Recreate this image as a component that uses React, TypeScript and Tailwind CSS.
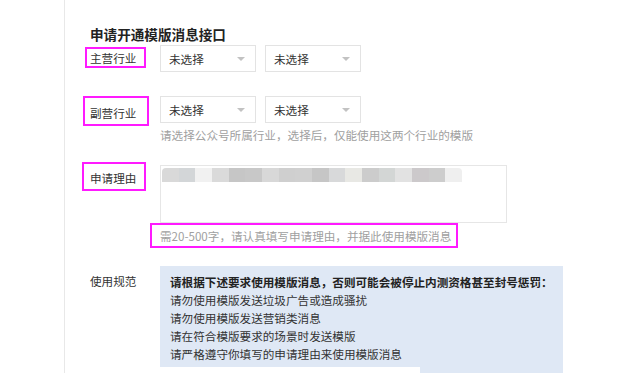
import React from "react";

const mosaic = [
  "#d9d9d9", "#d3d6d8", "#f1f1f1", "#dadada", "#c6c6c6", "#c8c8c8",
  "#d8d8d8", "#cfcfcf", "#d0d0d0", "#c6c6c6", "#d8d9da", "#e8e8e4",
  "#cccccc", "#d3d6d5", "#e2e2e2", "#ccc9cb", "#cdcdcd", "#efefef",
];

const rules = [
  "请勿使用模版发送垃圾广告或造成骚扰",
  "请勿使用模版发送营销类消息",
  "请在符合模版要求的场景时发送模版",
  "请严格遵守你填写的申请理由来使用模版消息",
];

function Select() {
  return (
    <div className="w-[96px] h-[27px] border border-[#e3e3e3] bg-white flex items-center justify-between pl-[8px] pr-[10px] text-[#333]">
      <span>未选择</span>
      <span className="w-0 h-0 border-x-[4px] border-x-transparent border-t-[4px] border-t-[#c2c2c2]" />
    </div>
  );
}

export default function App() {
  return (
    <div
      className="w-[626px] h-[373px] bg-white overflow-hidden text-[11.6px] leading-[16px]"
      style={{ fontFamily: '"Noto Sans CJK SC", "Noto Sans", sans-serif' }}
    >
      <div className="ml-[64px] h-full border-l border-[#e8e8e8] pt-[24px]">
        <h2 className="pl-[25px] text-[13.6px] leading-[20px] font-bold text-[#222]">申请开通模版消息接口</h2>

        {/* 主营行业 */}
        <div className="flex items-start mt-[1px]">
          <div className="w-[95px] shrink-0 pt-[2px]">
            <div className="ml-[20px] w-[61px] h-[21px] border-2 border-[#ff1aff] pl-[3px] flex items-center text-[#333]">
              主营行业
            </div>
          </div>
          <div className="flex gap-[9px]">
            <Select />
            <Select />
          </div>
        </div>

        {/* 副营行业 */}
        <div className="flex items-start mt-[24px]">
          <div className="w-[95px] shrink-0">
            <div className="ml-[18px] w-[66px] h-[30px] border-2 border-[#ff1aff] pl-[5px] pt-[3px] flex items-center text-[#333]">
              副营行业
            </div>
          </div>
          <div>
            <div className="flex gap-[9px]">
              <Select />
              <Select />
            </div>
            <p className="mt-[4px] text-[#a0a0a0]">请选择公众号所属行业，选择后，仅能使用这两个行业的模版</p>
          </div>
        </div>

        {/* 申请理由 */}
        <div className="flex items-start mt-[19px]">
          <div className="w-[95px] shrink-0">
            <div className="ml-[17px] w-[64px] h-[29px] border-2 border-[#ff1aff] pl-[6px] pt-[2px] flex items-center text-[#333]">
              申请理由
            </div>
          </div>
          <div className="mt-[3px]">
            <div className="w-[347px] h-[58px] border border-[#e6e6e6] pt-[2px] pl-[1px]">
              <div className="flex h-[14px] w-[300px] rounded-t-[4px] overflow-hidden">
                {mosaic.map((c, i) => (
                  <div key={i} className="h-full flex-1" style={{ backgroundColor: c }} />
                ))}
              </div>
            </div>
            <div className="-ml-[10px] w-[308px] h-[25px] border-2 border-[#ff1aff] pl-[8px] flex items-center text-[#a0a0a0]">
              需20-500字，请认真填写申请理由，并据此使用模版消息
            </div>
          </div>
        </div>

        {/* 使用规范 */}
        <div className="flex items-start mt-[18px]">
          <div className="w-[95px] shrink-0 pl-[25px] pt-[6px] leading-[18px] text-[#333]">使用规范</div>
          <div className="relative w-[403px] h-[120px] bg-[#dfe8f5] pt-[7px] pl-[10px] leading-[18px] text-[#333]">
            <p className="font-bold text-[#222]">请根据下述要求使用模版消息，否则可能会被停止内测资格甚至封号惩罚：</p>
            {rules.map((r) => (
              <p key={r}>{r}</p>
            ))}
            <div className="absolute left-0 top-[101px] w-[260px] h-[20px] bg-white" />
          </div>
        </div>
      </div>
    </div>
  );
}
